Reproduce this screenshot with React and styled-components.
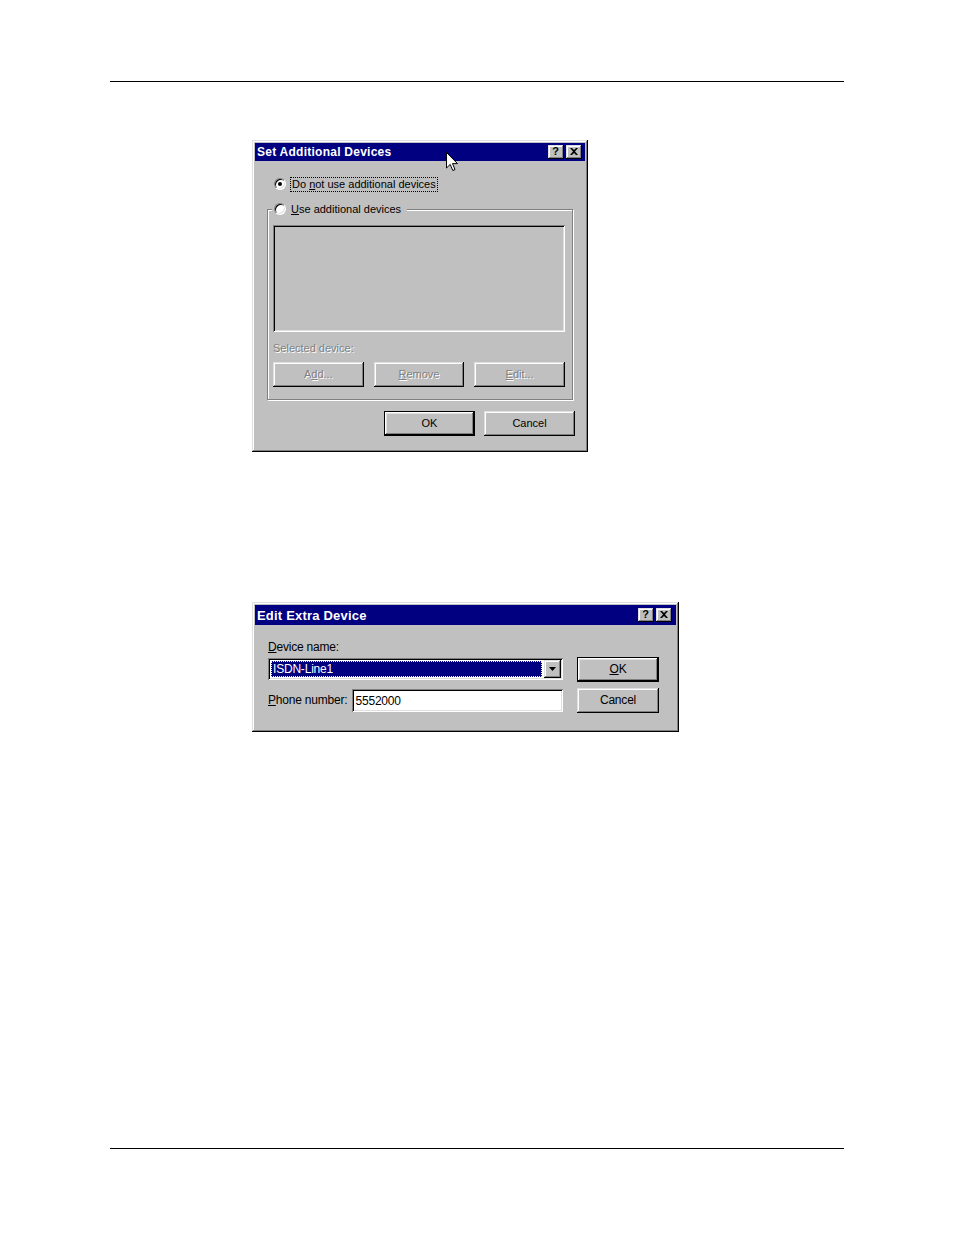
import React from "react";
import styled, { createGlobalStyle } from "styled-components";

const Global = createGlobalStyle`
  html, body { margin: 0; padding: 0; background: #fff; }
  * { box-sizing: border-box; }
`;

const Page = styled.div`
  width: 954px;
  height: 1235px;
  padding: 81px 110px 0;
  display: flex;
  flex-direction: column;
  font-family: "Liberation Sans", Arial, sans-serif;
`;

const Rule = styled.div`
  width: 734px;
  height: 1px;
  background: #000;
  margin-top: ${(p) => p.$top || 0}px;
`;

const raised = `
  box-shadow: inset -1px -1px #000, inset 1px 1px #dfdfdf,
    inset -2px -2px #808080, inset 2px 2px #fff;
`;

const sunken = `
  box-shadow: inset 1px 1px #808080, inset -1px -1px #fff,
    inset 2px 2px #000, inset -2px -2px #dfdfdf;
`;

const Window = styled.div`
  position: relative;
  width: ${(p) => p.$w}px;
  height: ${(p) => p.$h}px;
  margin-top: ${(p) => p.$top}px;
  margin-left: 142px;
  padding: 3px;
  background: #c0c0c0;
  ${raised}
  display: flex;
  flex-direction: column;
`;

const TitleBar = styled.div`
  height: ${(p) => p.$h}px;
  background: #000080;
  display: flex;
  align-items: center;
  padding: 0 ${(p) => p.$pr}px 0 2px;
  gap: 2px;
`;

const TitleText = styled.div`
  flex: 1;
  color: #fff;
  font-weight: bold;
  font-size: ${(p) => p.$fs}px;
  letter-spacing: ${(p) => p.$ls || 0}px;
  white-space: nowrap;
`;

const TitleBtn = styled.div`
  width: 16px;
  height: 14px;
  background: #c0c0c0;
  ${raised}
  display: flex;
  align-items: center;
  justify-content: center;
  font-weight: bold;
  font-size: 11px;
  color: #000;
  line-height: 1;
  padding: 0 1px 1px 0;
`;

const Body1 = styled.div`
  flex: 1;
  padding: 15px 10px 13px 12px;
  display: flex;
  flex-direction: column;
  font-size: 11px;
  color: #000;
`;

const RadioRow = styled.div`
  display: flex;
  align-items: center;
  height: 16px;
  gap: 5px;
  margin-left: ${(p) => p.$ml || 0}px;
  white-space: nowrap;
`;

const Radio = styled.span`
  width: 12px;
  height: 12px;
  border-radius: 50%;
  background: #fff;
  border: 1px solid;
  border-color: #808080 #fff #fff #808080;
  box-shadow: inset 1px 1px #000, inset -1px -1px #dfdfdf;
  display: flex;
  align-items: center;
  justify-content: center;
  flex: none;
  &::after {
    content: "";
    width: 4px;
    height: 4px;
    border-radius: 50%;
    background: ${(p) => (p.$checked ? "#000" : "transparent")};
  }
`;

const Focus = styled.span`
  outline: 1px dotted #000;
  outline-offset: 0;
  padding: 0 1px;
  line-height: 13px;
`;

const GroupBox = styled.div`
  margin-top: 17px;
  margin-right: 2px;
  height: 191px;
  border: 1px solid #808080;
  box-shadow: inset 1px 1px #fff, 1px 1px #fff;
  padding: 0 7px 12px 5px;
  display: flex;
  flex-direction: column;
`;

const Legend = styled.div`
  margin-top: -9px;
  margin-left: -1px;
  align-self: flex-start;
  background: #c0c0c0;
  padding: 0 6px 0 2px;
`;

const ListBox = styled.div`
  margin-top: 8px;
  height: 107px;
  background: #c0c0c0;
  ${sunken}
`;

const Disabled = styled.div`
  color: #808080;
  text-shadow: 1px 1px #fff;
  margin-top: 9px;
  line-height: 14px;
  height: 14px;
`;

const BtnGrid = styled.div`
  margin-top: 7px;
  display: grid;
  grid-template-columns: repeat(3, 1fr);
  gap: 10px;
`;

const Button = styled.div`
  height: 25px;
  width: ${(p) => (p.$w ? p.$w + "px" : "auto")};
  background: #c0c0c0;
  display: flex;
  align-items: center;
  justify-content: center;
  font-size: ${(p) => p.$fs || 11}px;
  color: ${(p) => (p.$disabled ? "#808080" : "#000")};
  text-shadow: ${(p) => (p.$disabled ? "1px 1px #fff" : "none")};
  ${(p) =>
    p.$default
      ? `box-shadow: inset 0 0 0 1px #000, inset -2px -2px #000, inset 2px 2px #fff, inset -3px -3px #808080, inset 3px 3px #dfdfdf;`
      : raised}
  padding-bottom: 1px;
`;

const BottomRow = styled.div`
  margin-top: 11px;
  display: flex;
  justify-content: flex-end;
  gap: 9px;
`;

const Body2 = styled.div`
  flex: 1;
  display: flex;
  align-items: flex-start;
  padding: 15px 17px 0 13px;
  gap: 14px;
  font-size: 12px;
  letter-spacing: -0.2px;
  color: #000;
`;

const LeftCol = styled.div`
  width: 295px;
  display: flex;
  flex-direction: column;
`;

const Label = styled.div`
  line-height: 15px;
  height: 15px;
  white-space: nowrap;
`;

const Combo = styled.div`
  margin-top: 3px;
  height: 22px;
  background: #fff;
  ${sunken}
  padding: 2px;
  display: flex;
  align-items: stretch;
`;

const Selected = styled.div`
  flex: 1;
  margin: 1px 2px 1px 1px;
  background: #000080;
  color: #fff;
  outline: 1px dotted #ffff80;
  outline-offset: -1px;
  padding-left: 2px;
  display: flex;
  align-items: center;
`;

const DropBtn = styled.div`
  width: 17px;
  background: #c0c0c0;
  ${raised}
  display: flex;
  align-items: center;
  justify-content: center;
`;

const PhoneRow = styled.div`
  margin-top: 9px;
  display: flex;
  align-items: center;
  gap: 5px;
`;

const Input = styled.div`
  flex: 1;
  height: 23px;
  background: #fff;
  ${sunken}
  padding: 0 3px;
  display: flex;
  align-items: center;
`;

const RightCol = styled.div`
  width: 82px;
  padding-top: 17px;
  display: flex;
  flex-direction: column;
  gap: 6px;
`;

const Cursor = styled.svg`
  position: absolute;
  left: 194px;
  top: 12px;
`;

const CloseGlyph = () => (
  <svg width="8" height="7" viewBox="0 0 8 7">
    <path d="M0 0h2l2 2 2-2h2L5 3.5 8 7H6L4 5 2 7H0l3-3.5z" fill="#000" />
  </svg>
);

const DownGlyph = () => (
  <svg width="7" height="4" viewBox="0 0 7 4">
    <path d="M0 0h7L3.5 4z" fill="#000" />
  </svg>
);

export default function App() {
  return (
    <>
      <Global />
      <Page>
        <Rule />
        <Window $w={336} $h={312} $top={58}>
          <TitleBar $h={18} $pr={3}>
            <TitleText $fs={12} $ls={0.25}>Set Additional Devices</TitleText>
            <TitleBtn>?</TitleBtn>
            <TitleBtn>
              <CloseGlyph />
            </TitleBtn>
          </TitleBar>
          <Body1>
            <RadioRow $ml={7}>
              <Radio $checked />
              <Focus>
                Do <u>n</u>ot use additional devices
              </Focus>
            </RadioRow>
            <GroupBox>
              <Legend>
                <RadioRow>
                  <Radio />
                  <span>
                    <u>U</u>se additional devices
                  </span>
                </RadioRow>
              </Legend>
              <ListBox />
              <Disabled>Selected device:</Disabled>
              <BtnGrid>
                <Button $disabled>
                  <span>
                    A<u>d</u>d...
                  </span>
                </Button>
                <Button $disabled>
                  <span>
                    <u>R</u>emove
                  </span>
                </Button>
                <Button $disabled>
                  <span>
                    <u>E</u>dit...
                  </span>
                </Button>
              </BtnGrid>
            </GroupBox>
            <BottomRow>
              <Button $default $w={91}>
                OK
              </Button>
              <Button $w={91}>Cancel</Button>
            </BottomRow>
          </Body1>
          <Cursor width="13" height="20" viewBox="0 0 13 20">
            <path
              d="M0.5 0.5 L0.5 16 L4.2 12.4 L6.8 18.5 L9 17.6 L6.5 11.6 L11.5 11.6 Z"
              fill="#fff"
              stroke="#000"
              strokeWidth="1"
            />
          </Cursor>
        </Window>

        <Window $w={427} $h={130} $top={150}>
          <TitleBar $h={20} $pr={4}>
            <TitleText $fs={13} $ls={0.2}>Edit Extra Device</TitleText>
            <TitleBtn>?</TitleBtn>
            <TitleBtn>
              <CloseGlyph />
            </TitleBtn>
          </TitleBar>
          <Body2>
            <LeftCol>
              <Label>
                <u>D</u>evice name:
              </Label>
              <Combo>
                <Selected>ISDN-Line1</Selected>
                <DropBtn>
                  <DownGlyph />
                </DropBtn>
              </Combo>
              <PhoneRow>
                <Label>
                  <u>P</u>hone number:
                </Label>
                <Input>5552000</Input>
              </PhoneRow>
            </LeftCol>
            <RightCol>
              <Button $default $fs={12}>
                <span>
                  <u>O</u>K
                </span>
              </Button>
              <Button $fs={12}>Cancel</Button>
            </RightCol>
          </Body2>
        </Window>

        <Rule $top={416} />
      </Page>
    </>
  );
}
